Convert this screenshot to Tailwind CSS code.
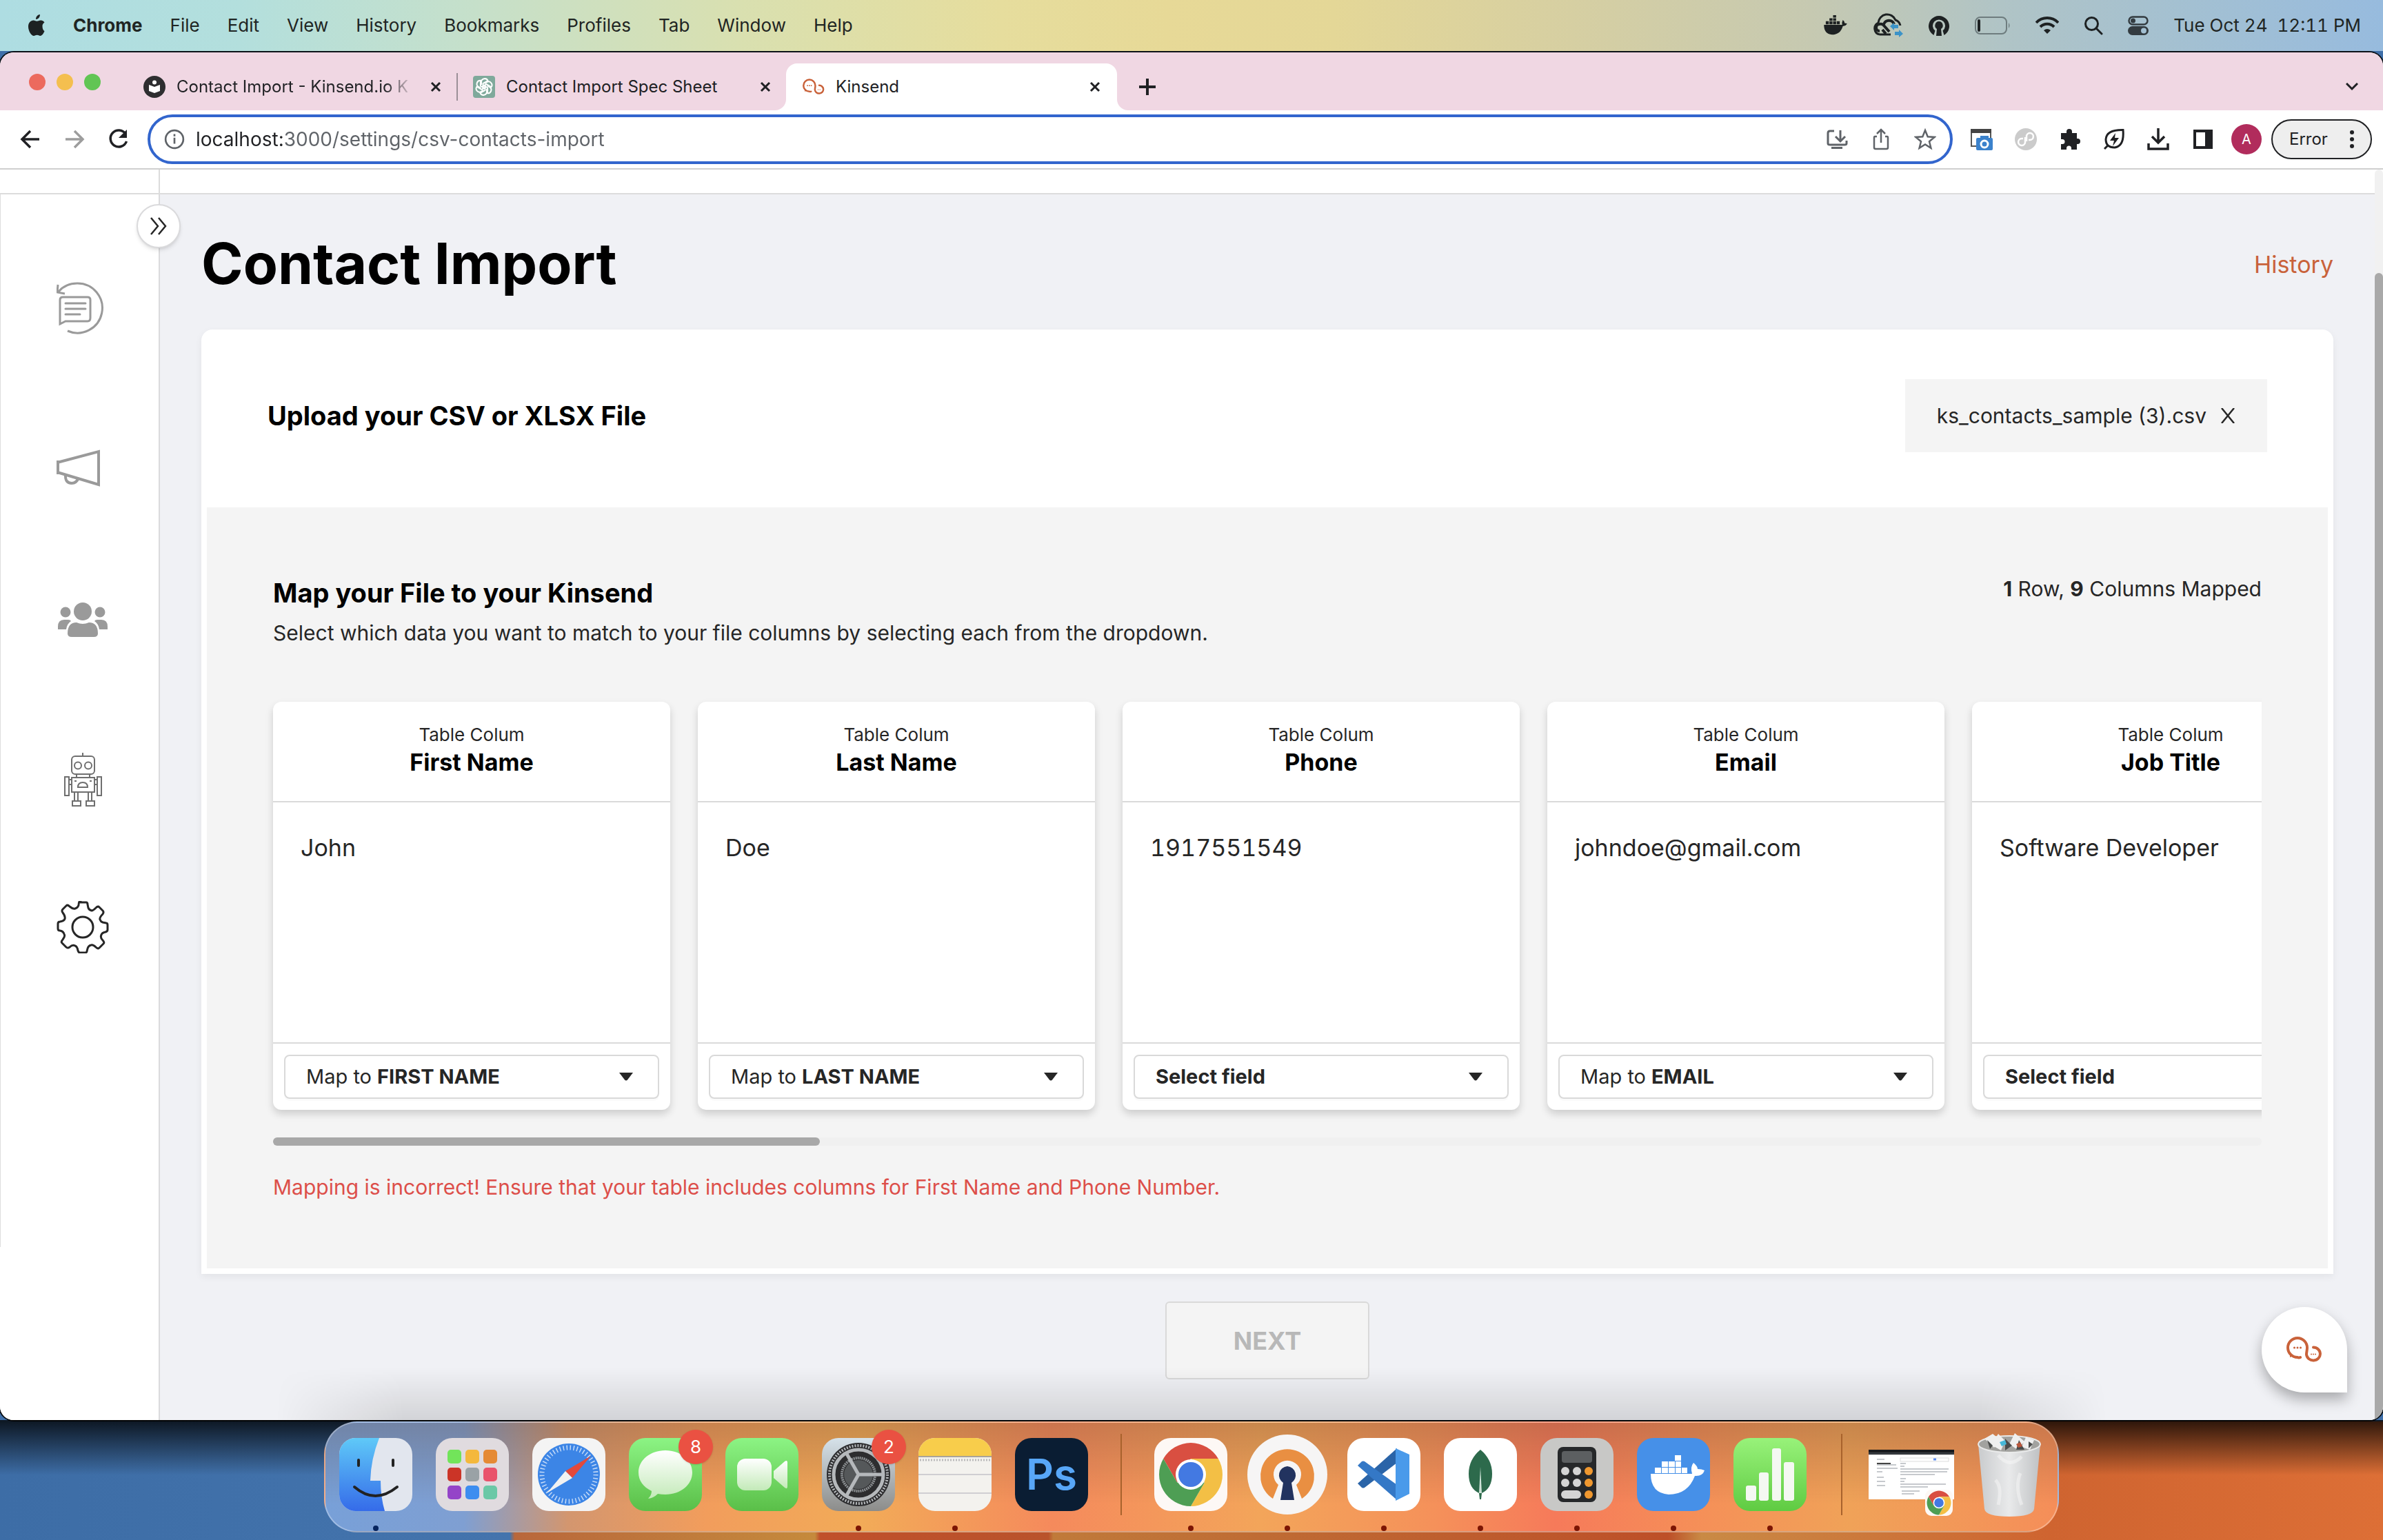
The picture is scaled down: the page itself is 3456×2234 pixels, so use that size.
<!DOCTYPE html>
<html lang="en">
<head>
<meta charset="utf-8">
<meta name="viewport" content="width=device-width, initial-scale=1">
<title>Kinsend - Contact Import</title>
<script src="https://cdn.jsdelivr.net/npm/@tailwindcss/browser@4"></script>
</head>
<body class="flex min-h-screen flex-col overflow-x-hidden bg-linear-to-r from-[#3f6fa9] from-20% via-[#8a5a2c] via-25% to-[#3f6fa9] font-[Inter,sans-serif] text-[#262626]">

<!-- shared symbols -->
<svg class="hidden" aria-hidden="true">
  <symbol id="close" viewBox="0 0 16 16"><path d="M2 2l12 12M14 2L2 14" fill="none" stroke="#202124" stroke-width="3"/></symbol>
  <symbol id="kinsend" viewBox="0 0 52 38">
    <path d="M20 30Q18 31 16 30A14 14 0 1 1 30 16C30 20 29 22 29 26A10 9.500 0 1 0 39 15.500" fill="none" stroke="#c9623a" stroke-width="4" stroke-linecap="round"/>
    <path d="M5 22v8q4-2 6-1zM45 31l1 3-6-1z" fill="#c9623a"/>
    <g fill="#c9623a"><circle cx="11.500" cy="16" r="1.500"/><circle cx="16" cy="16" r="1.500"/><circle cx="20.500" cy="16" r="1.500"/><circle cx="36" cy="25.500" r="1"/><circle cx="39" cy="25.500" r="1"/><circle cx="42" cy="25.500" r="1"/></g>
  </symbol>
  <symbol id="chrome" viewBox="0 0 100 100">
    <path d="M10.2 27A46 46 0 0 1 89.8 27L50 27L30.1 61.5Z" fill="#d94f41"/>
    <path d="M89.8 27A46 46 0 0 1 50 96L69.9 61.5L50 27Z" fill="#f3bf45"/>
    <path d="M50 96A46 46 0 0 1 10.2 27L30.1 61.5L69.900 61.5Z" fill="#4e9e54"/>
    <circle cx="50" cy="50" r="22" fill="#fff"/><circle cx="50" cy="50" r="18" fill="#4379e2"/>
  </symbol>
  <symbol id="caret" viewBox="0 0 20 12"><path d="M0 0h20L12 10.500q-2 2-4 0z" fill="#262626"/></symbol>
  <symbol id="ovpn" viewBox="0 0 32 32"><path d="M8.500 30A15 15 0 1 1 23.500 30L21.500 23.500A9 9 0 1 0 10.500 23.500Z"/><path d="M16 10a6 6 0 0 1 3 11l1 10h-8l1-10a6 6 0 0 1 3-11z"/></symbol>
  <symbol id="whale" viewBox="0 0 40 34"><path d="M1 16H31Q30 12 32 8Q35 10 35 13Q37 13 39 14Q37 18 32 18Q28 32 14 32Q1 31 1 16Z"/><path d="M4 10h5v5H4zM10 10h5v5h-5zM16 10h5v5h-5zM22 10h5v5h-5zM10 5h5v4h-5zM16 5h5v4h-5zM16 0h5v4h-5z"/></symbol>
</svg>

<!-- macOS menu bar -->
<header class="flex h-[74px] items-center justify-between bg-[linear-gradient(90deg,#aedde2_0%,#b3dfdd_10%,#c6e0ca_20%,#d9e0b0_31%,#e6dd9d_42%,#e7d997_49%,#e4d797_56%,#d6cfa2_66%,#c6c9b1_76%,#b0c4c6_84%,#a3c0d2_92%,#97bbde_100%)] pr-8 pl-10 text-[26px] leading-8 text-[#1f2523]">
  <nav aria-label="Menu bar" class="flex items-center gap-10">
    <svg class="h-8 w-[26px]" viewBox="0 0 26 32" fill="#1d2122"><path d="M18 0c0 4-2.500 6.800-6 7 0-4 3-6.800 6-7zM21.500 17c0-3.500 2.500-5 3-5.500-2-2.800-4.500-3-5.500-3-2.500 0-4 1.300-5.500 1.300S10.500 8.500 8.500 8.500C4.500 8.500 1 12 1 17.500 1 24 5.500 31 9 31c1.800 0 2.700-1.200 4.800-1.200S16.500 31 18.400 31c2.600 0 5.100-4 6.100-7-1.500-.6-3-3-3-7z"/></svg>
    <span class="font-bold">Chrome</span><span>File</span><span>Edit</span><span>View</span><span>History</span><span>Bookmarks</span><span>Profiles</span><span>Tab</span><span>Window</span><span>Help</span>
  </nav>
  <div class="flex items-center gap-9">
    <svg class="h-[30px] w-9" viewBox="0 0 40 34" fill="#1d2122"><use href="#whale"/></svg>
    <svg class="h-9 w-11" viewBox="0 0 44 36"><path d="M10 31a9 9 0 0 1-2-17A13 13 0 0 1 33 10a11 11 0 0 1 7 8M10 31h16" fill="none" stroke="#1d2122" stroke-width="3"/><path d="M10 26a5 5 0 0 1 0-10q4-1 7 3l7 8M16 16a8 8 0 0 1 15 0M14 24l5 6" fill="none" stroke="#1d2122" stroke-width="4"/><path d="M25 19l6-5v3h6v5h-6v3zM44 30l-6-6v3h-6v5h6v3z" fill="#3c93c8"/></svg>
    <svg class="size-8" viewBox="0 0 32 32" fill="#1d2122"><use href="#ovpn"/></svg>
    <svg class="h-[26px] w-[52px]" viewBox="0 0 52 26"><rect x="1" y="1" width="45" height="24" rx="7" fill="none" stroke="#6e7c7e" stroke-width="2"/><rect x="4" y="4" width="4" height="18" rx="2" fill="#1d2122"/><path d="M49 9q3 4 0 8z" fill="#6e7c7e"/></svg>
    <svg class="h-[26px] w-[34px]" viewBox="0 0 34 26" fill="none" stroke="#1d2122" stroke-width="4"><path d="M1 9a22 22 0 0 1 32 0M7 15a14 14 0 0 1 20 0"/><path d="M12 20q5-4 10 0l-5 5z" fill="#1d2122" stroke="none"/></svg>
    <svg class="size-[28px]" viewBox="0 0 28 28" fill="none" stroke="#1d2122" stroke-width="3"><circle cx="11.500" cy="11.500" r="9"/><path d="M18 18l8 8" stroke-linecap="round"/></svg>
    <svg class="h-7 w-[30px]" viewBox="0 0 30 28"><rect x="1.500" y="1.500" width="27" height="11" rx="5.500" fill="none" stroke="#333b40" stroke-width="2.500"/><circle cx="7.500" cy="7" r="3.500" fill="#333b40"/><rect y="15" width="30" height="13" rx="6.500" fill="#333b40"/><circle cx="23" cy="21.500" r="4" fill="#a3c0d2"/></svg>
    <time class="whitespace-pre tabular-nums">Tue Oct 24  12:11 PM</time>
  </div>
</header>

<!-- browser window -->
<div class="mt-0.5 flex flex-1 flex-col overflow-hidden rounded-[20px] bg-white shadow-[0_0_0_2px_#0c1218]">

  <!-- tab strip -->
  <div class="flex h-[84px] items-end bg-[#f0d7e3]">
    <div class="flex h-[68px] w-[168px] items-center gap-4 pb-[14px] pl-[42px]">
      <span class="size-6 rounded-full bg-[#ec6a5e]"></span><span class="size-6 rounded-full bg-[#f4bf4f]"></span><span class="size-6 rounded-full bg-[#61c554]"></span>
    </div>
    <div class="flex h-[68px] w-[494px] items-center pl-10 text-2xl text-[#202124]">
      <svg class="size-8 shrink-0" viewBox="0 0 32 32"><circle cx="16" cy="16" r="16" fill="#2e2e30"/><circle cx="16" cy="9.500" r="3" fill="#fff"/><path d="M8 13l8 3 8-3v9l-8 3-8-3z" fill="#fff"/></svg>
      <span class="ml-4 w-[344px] bg-linear-to-r from-[#202124] from-88% to-transparent bg-clip-text whitespace-nowrap text-transparent">Contact Import - Kinsend.io K</span>
      <button aria-label="Close tab" class="ml-6 shrink-0"><svg class="size-4"><use href="#close"/></svg></button>
    </div>
    <div class="flex h-[68px] w-[478px] items-center text-2xl text-[#202124]">
      <span class="h-10 w-0.5 bg-[#9b8f97]"></span>
      <svg class="ml-[22px] size-8 shrink-0" viewBox="0 0 32 32"><rect width="32" height="32" rx="4" fill="#7fa99b"/><g fill="none" stroke="#fff" stroke-width="2"><path id="petal" d="M12 13v-4a5 5 0 0 1 9.500-2l-7 4v8"/><use href="#petal" transform="rotate(60 16 16)"/><use href="#petal" transform="rotate(120 16 16)"/><use href="#petal" transform="rotate(180 16 16)"/><use href="#petal" transform="rotate(240 16 16)"/><use href="#petal" transform="rotate(300 16 16)"/></g></svg>
      <span class="ml-4 flex-1">Contact Import Spec Sheet</span>
      <button aria-label="Close tab" class="mr-[22px]"><svg class="size-4"><use href="#close"/></svg></button>
    </div>
    <div class="relative flex h-[68px] w-[480px] items-center rounded-t-2xl bg-white px-6 text-2xl text-[#202124]">
      <svg class="absolute bottom-0 -left-4 size-4" viewBox="0 0 16 16"><path d="M16 0v16H0A16 16 0 0 0 16 0z" fill="#fff"/></svg>
      <svg class="absolute -right-4 bottom-0 size-4" viewBox="0 0 16 16"><path d="M0 0v16h16A16 16 0 0 1 0 0z" fill="#fff"/></svg>
      <svg class="h-6 w-8"><use href="#kinsend"/></svg>
      <span class="ml-4 flex-1">Kinsend</span>
      <button aria-label="Close tab"><svg class="size-4"><use href="#close"/></svg></button>
    </div>
    <button aria-label="New tab" class="ml-8 flex h-[68px] items-center"><svg class="size-6" viewBox="0 0 24 24"><path d="M12 0v24M0 12h24" stroke="#202124" stroke-width="4"/></svg></button>
    <button aria-label="Search tabs" class="mr-9 ml-auto flex h-[68px] items-center"><svg class="h-3 w-[18px]" viewBox="0 0 18 12"><path d="M1 1l8 8 8-8" fill="none" stroke="#202124" stroke-width="3"/></svg></button>
  </div>

  <!-- toolbar -->
  <div class="flex h-[86px] items-center border-b-2 border-[#cfcfcf] pr-4 pl-7">
    <div class="flex items-center gap-8">
      <button aria-label="Back"><svg class="size-8" viewBox="0 0 32 32" fill="none" stroke="#202124" stroke-width="3.500"><path d="M29 16H5M16 4L4 16l12 12"/></svg></button>
      <button aria-label="Forward"><svg class="size-8" viewBox="0 0 32 32" fill="none" stroke="#9d9d9d" stroke-width="3.500"><path d="M3 16h24M16 4l12 12-12 12"/></svg></button>
      <button aria-label="Reload"><svg class="size-8" viewBox="0 0 32 32"><path d="M26 8A12 12 0 1 0 27.500 19" fill="none" stroke="#202124" stroke-width="3.500"/><path d="M28 2v12H16z" fill="#202124"/></svg></button>
    </div>
    <div class="ml-[26px] flex h-[72px] flex-1 items-center rounded-full border-4 border-[#3265cd] pr-5 pl-5">
      <svg class="size-[30px]" viewBox="0 0 28 28"><circle cx="14" cy="14" r="12" fill="none" stroke="#5f6368" stroke-width="2.500"/><path d="M14 12v8M14 7v3" stroke="#5f6368" stroke-width="2.500"/></svg>
      <div class="ml-4 flex-1 text-[28px] leading-9">
        <input aria-label="Address" value="localhost:3000/settings/csv-contacts-import" class="w-full bg-linear-to-r from-[#202124] from-[126px] to-[#5f6368] to-[126px] bg-clip-text text-transparent outline-none">
      </div>
      <div class="flex items-center gap-8 text-[#5f6368]">
        <svg class="size-8" viewBox="0 0 32 32" fill="none" stroke="currentColor" stroke-width="3"><path d="M12 4H6q-3 0-3 3v15q0 2 3 2h21q3 0 3-2v-4M21 3v14M14 12l7 7 7-7"/><path d="M8 27h16v3H8z" fill="currentColor" stroke="none"/></svg>
        <svg class="size-8" viewBox="0 0 32 32" fill="none" stroke="currentColor" stroke-width="2.500"><path d="M10 12H7q-1 0-1 2v14q0 2 2 2h16q2 0 2-2V14q0-2-1-2h-3M16 21V3M10 8l6-6 6 6"/></svg>
        <svg class="size-8" viewBox="0 0 32 32" fill="none" stroke="currentColor" stroke-width="2.500"><path d="M16 3l3.700 9.200 9.800.7-7.500 6.300 2.400 9.600L16 23.500l-8.400 5.300L10 19.200 2.500 12.900l9.800-.7z"/></svg>
      </div>
    </div>
    <div class="ml-[26px] flex items-center gap-8">
      <svg class="size-8" viewBox="0 0 32 32"><path d="M1 2h28v24H1z" fill="#fff" stroke="#555" stroke-width="2"/><path d="M0 1h30v6H0z" fill="#444"/><rect x="8" y="14" width="24" height="18" rx="2" fill="#3b82cc"/><path d="M14 11h12v4H14z" fill="#3b82cc"/><circle cx="20" cy="23" r="5" fill="none" stroke="#fff" stroke-width="3"/></svg>
      <svg class="size-8" viewBox="0 0 32 32"><circle cx="16" cy="16" r="16" fill="#cbcbcb"/><path d="M17 19v-8a5 5 0 1 1 5 6h-2M15 13v8a5 5 0 1 1-5-6h2" fill="none" stroke="#fff" stroke-width="2.500"/></svg>
      <svg class="size-8" viewBox="0 0 32 32" fill="#202124"><path d="M3 7h8V5a4 4 0 0 1 8 0v2h7v8h1a4 4 0 0 1 0 8h-1v8h-8v-2a3 3 0 0 0-7 0v2H3v-8h2a3.500 3.500 0 0 0 0-7H3z"/></svg>
      <svg class="size-8" viewBox="0 0 32 32" fill="none" stroke="#202124" stroke-width="3"><path d="M29 2.500Q31 26 17 28 4 28 4 16 5 2 29 2.500zM8 24l-6 6"/><path d="M18 7l-8 11h6l-2 8 9-12h-6z" fill="#202124" stroke="none"/></svg>
      <svg class="size-8" viewBox="0 0 32 32" fill="none" stroke="#202124" stroke-width="3.500"><path d="M16 0v21M7 12l9 9 9-9M2 22v8h28v-8"/></svg>
      <svg class="h-[30px] w-8" viewBox="0 0 32 30"><path d="M3 1h28v28H3z" fill="#202124"/><path d="M7 5h13v20H7z" fill="#fff"/></svg>
    </div>
    <button class="ml-[26px] size-11 rounded-full bg-[#b12c5c] text-xl text-white">A</button>
    <button class="ml-[14px] flex h-[58px] w-[146px] items-center justify-between rounded-full border-2 border-[#202124] bg-[#eeeeee] px-6 text-2xl text-[#202124]">Error
      <svg class="h-7 w-1.5" viewBox="0 0 6 28" fill="#202124"><circle cx="3" cy="4" r="3"/><circle cx="3" cy="14" r="3"/><circle cx="3" cy="24" r="3"/></svg>
    </button>
  </div>

  <!-- page -->
  <div class="flex flex-1">
    <div class="flex min-w-0 flex-1 flex-col">
      <div class="h-9 border-b-2 border-[#dcdcdc]"><div class="h-[34px] w-[232px] border-r-2 border-[#dcdcdc]"></div></div>
      <div class="flex flex-1">
        <aside class="relative z-10 w-[232px] shrink-0 border-r-2 border-[#dadadc] bg-white">
          <button aria-label="Expand sidebar" class="absolute top-[14px] -right-8 flex size-16 items-center justify-center rounded-full border-2 border-[#dadadc] bg-white shadow-md">
            <svg class="h-[26px] w-6" viewBox="0 0 24 26" fill="none" stroke="#262626" stroke-width="2.500"><path d="M1 1l10 12L1 25M12 1l10 12-10 12"/></svg>
          </button>
          <nav aria-label="Sections" class="flex flex-col items-center gap-[166px] border-l border-[#dddddd] pt-[127px] pb-[426px] pl-2">
            <a href="#" aria-label="Messages"><svg class="h-[76px] w-[76px]" viewBox="4 0 76 76" fill="none" stroke="#9a9a9a" stroke-width="3"><path d="M7 14Q17 2 34 2A36 36 0 1 1 20 71M6 4l-1 11 11 2M9 61V26q0-4 4-4h36q4 0 4 4v26q0 5-4 5H17z"/><path d="M17 31h29M17 39h29M17 47h21" stroke-linecap="round"/></svg></a>
            <a href="#" aria-label="Campaigns"><svg class="h-14 w-[76px]" viewBox="4 0 76 56" fill="none" stroke="#9a9a9a" stroke-width="4"><path d="M6 17v20M5 20L65 4v48L5 34M17 37q-1 13 9 13 7 0 10-8"/></svg></a>
            <a href="#" aria-label="Contacts"><svg class="h-[52px] w-[76px]" viewBox="0 0 76 52" fill="#9a9a9a"><circle cx="38" cy="14" r="13"/><circle cx="13" cy="15" r="7.500"/><circle cx="63" cy="15" r="7.500"/><path d="M2 40v-4q0-10 9-10h6q3 0 4 2-6 4-7 12zM74 40v-4q0-10-9-10h-6q-3 0-4 2 6 4 7 12zM16 46q0-16 13-16 9 4 18 0 13 0 13 16 0 5-6 5H22q-6 0-6-5z"/></svg></a>
            <a href="#" aria-label="Automation"><svg class="h-20 w-[76px]" viewBox="0 0 76 80" fill="none" stroke="#6f6f6f" stroke-width="2"><path d="M38 1v5"/><rect x="22" y="6" width="33" height="26" rx="5"/><circle cx="31" cy="19.500" r="5"/><circle cx="46" cy="19.500" r="5"/><path d="M29 32v5M48 32v5"/><rect x="22" y="37" width="33" height="21"/><path d="M31 51q0-7 7-7t7 7zM26 42h3M48 42h3"/><path d="M22 40h-4v7h4M55 40h4v7h-4"/><rect x="12" y="36" width="6" height="27"/><rect x="59" y="36" width="6" height="27"/><path d="M26 58v13M31 58v13M46 58v13M51 58v13"/><rect x="23" y="71" width="12" height="7"/><rect x="43" y="71" width="12" height="7"/></svg></a>
            <a href="#" aria-label="Settings" class="-mt-[30px]"><svg class="size-[76px]" viewBox="0 0 76 76" fill="none" stroke="#262626" stroke-width="3" stroke-linejoin="round"><path d="M33 2h10q2 0 2 3l1 5q1 3 5 4 2 0 6-4 3-3 5-1l5 5q2 2 0 5-5 5-4 8 1 3 4 4l5 1q2 0 2 3v7q0 2-3 3-5 1-6 4-2 4 2 8 3 3 1 5l-6 6q-2 2-5-1-4-4-7-3-4 1-5 5l-1 4q0 2-3 2h-7q-2 0-3-3-1-6-4-7-4-2-8 2-3 2-5 0l-6-6q-2-2 1-5 4-5 2-8-1-4-6-5-3 0-3-3v-7q0-3 3-3 6-1 7-4 1-4-3-9-2-3 0-5l5-5q2-2 5 1 5 4 8 3 4-1 5-5 0-6 3-6z"/><circle cx="38" cy="38" r="15"/></svg></a>
          </nav>
        </aside>

        <main class="relative flex-1 overflow-hidden bg-[#f0f1f5] pr-[60px] pb-[59px] pl-[60px]">
          <div class="flex h-[196px] items-center justify-between pt-[6px]">
            <h1 class="text-[82px] leading-none font-bold text-black">Contact Import</h1>
            <a href="#" class="text-[34px] text-[#c9623a]">History</a>
          </div>

          <section class="rounded-t-2xl bg-white shadow-[0_4px_12px_rgba(0,0,0,0.06)]">
            <div class="flex h-[258px] items-center justify-between px-24 pb-2">
              <h2 class="text-[38px] font-bold text-black">Upload your CSV or XLSX File</h2>
              <div class="flex h-[106px] items-center gap-5 bg-[#f4f4f4] px-[46px] text-[30px]">
                <span>ks_contacts_sample (3).csv</span>
                <button aria-label="Remove file"><svg class="size-[22px]" viewBox="0 0 22 22"><path d="M2 0l18 22M20 0L2 22" stroke="#262626" stroke-width="2.500"/></svg></button>
              </div>
            </div>
            <div class="border-8 border-t-0 border-white bg-[#f4f4f4] px-24 pt-[100px] pb-24">
              <div class="flex items-start justify-between">
                <div>
                  <h2 class="text-[38px] leading-[48px] font-bold text-black">Map your File to your Kinsend</h2>
                  <p class="mt-3 text-[30px] leading-[44px]">Select which data you want to match to your file columns by selecting each from the dropdown.</p>
                </div>
                <p class="text-[30px] leading-9"><b>1</b> Row, <b>9</b> Columns Mapped</p>
              </div>

              <div class="-mx-3 flex gap-10 overflow-hidden px-3 pt-[78px] pb-10 [clip-path:inset(0_12px_0_0)]">
                <article class="w-[576px] shrink-0 rounded-xl bg-white shadow-[0_6px_12px_rgba(0,0,0,0.16)]">
                  <header class="h-[146px] border-b-2 border-[#dadada] pt-[30px] text-center"><p class="text-[26px] leading-9">Table Colum</p><h3 class="text-[34px] leading-[44px] font-bold text-black">First Name</h3></header>
                  <p class="h-[350px] border-b-2 border-[#dadada] px-10 pt-11 text-[34px] leading-[44px]">John</p>
                  <div class="px-4 py-4"><label class="flex h-16 items-center gap-2 rounded-lg border-2 border-[#d9d9d9] pr-9 pl-[30px] text-[29px] shadow-[0_3px_0_rgba(0,0,0,0.02)]">Map to <select class="min-w-0 flex-1 appearance-none font-bold outline-none"><option>FIRST NAME</option><option>Select field</option></select><svg class="h-3 w-5"><use href="#caret"/></svg></label></div>
                </article>
                <article class="w-[576px] shrink-0 rounded-xl bg-white shadow-[0_6px_12px_rgba(0,0,0,0.16)]">
                  <header class="h-[146px] border-b-2 border-[#dadada] pt-[30px] text-center"><p class="text-[26px] leading-9">Table Colum</p><h3 class="text-[34px] leading-[44px] font-bold text-black">Last Name</h3></header>
                  <p class="h-[350px] border-b-2 border-[#dadada] px-10 pt-11 text-[34px] leading-[44px]">Doe</p>
                  <div class="px-4 py-4"><label class="flex h-16 items-center gap-2 rounded-lg border-2 border-[#d9d9d9] pr-9 pl-[30px] text-[29px] shadow-[0_3px_0_rgba(0,0,0,0.02)]">Map to <select class="min-w-0 flex-1 appearance-none font-bold outline-none"><option>LAST NAME</option><option>Select field</option></select><svg class="h-3 w-5"><use href="#caret"/></svg></label></div>
                </article>
                <article class="w-[576px] shrink-0 rounded-xl bg-white shadow-[0_6px_12px_rgba(0,0,0,0.16)]">
                  <header class="h-[146px] border-b-2 border-[#dadada] pt-[30px] text-center"><p class="text-[26px] leading-9">Table Colum</p><h3 class="text-[34px] leading-[44px] font-bold text-black">Phone</h3></header>
                  <p class="h-[350px] border-b-2 border-[#dadada] px-10 pt-11 text-[34px] leading-[44px] tabular-nums">1917551549</p>
                  <div class="px-4 py-4"><label class="flex h-16 items-center gap-2 rounded-lg border-2 border-[#d9d9d9] pr-9 pl-[30px] text-[29px] shadow-[0_3px_0_rgba(0,0,0,0.02)]"><select aria-label="Map Phone" class="min-w-0 flex-1 appearance-none font-bold outline-none"><option>Select field</option><option>PHONE</option></select><svg class="h-3 w-5"><use href="#caret"/></svg></label></div>
                </article>
                <article class="w-[576px] shrink-0 rounded-xl bg-white shadow-[0_6px_12px_rgba(0,0,0,0.16)]">
                  <header class="h-[146px] border-b-2 border-[#dadada] pt-[30px] text-center"><p class="text-[26px] leading-9">Table Colum</p><h3 class="text-[34px] leading-[44px] font-bold text-black">Email</h3></header>
                  <p class="h-[350px] border-b-2 border-[#dadada] px-10 pt-11 text-[34px] leading-[44px]">johndoe@gmail.com</p>
                  <div class="px-4 py-4"><label class="flex h-16 items-center gap-2 rounded-lg border-2 border-[#d9d9d9] pr-9 pl-[30px] text-[29px] shadow-[0_3px_0_rgba(0,0,0,0.02)]">Map to <select class="min-w-0 flex-1 appearance-none font-bold outline-none"><option>EMAIL</option><option>Select field</option></select><svg class="h-3 w-5"><use href="#caret"/></svg></label></div>
                </article>
                <article class="w-[576px] shrink-0 rounded-xl bg-white shadow-[0_6px_12px_rgba(0,0,0,0.16)]">
                  <header class="h-[146px] border-b-2 border-[#dadada] pt-[30px] text-center"><p class="text-[26px] leading-9">Table Colum</p><h3 class="text-[34px] leading-[44px] font-bold text-black">Job Title</h3></header>
                  <p class="h-[350px] border-b-2 border-[#dadada] px-10 pt-11 text-[34px] leading-[44px]">Software Developer</p>
                  <div class="px-4 py-4"><label class="flex h-16 items-center gap-2 rounded-lg border-2 border-[#d9d9d9] pr-9 pl-[30px] text-[29px] shadow-[0_3px_0_rgba(0,0,0,0.02)]"><select aria-label="Map Job Title" class="min-w-0 flex-1 appearance-none font-bold outline-none"><option>Select field</option><option>JOB TITLE</option></select><svg class="h-3 w-5"><use href="#caret"/></svg></label></div>
                </article>
              </div>
              <div class="h-3 rounded-full bg-[#f0f0f0]"><div class="h-3 rounded-full bg-[#a8a8a8]" style="width:27.5%"></div></div>
              <p role="alert" class="mt-[38px] text-[30px] leading-[44px] text-[#dd4f4a]">Mapping is incorrect! Ensure that your table includes columns for First Name and Phone Number.</p>
            </div>
          </section>

          <div class="mt-10 flex justify-center">
            <button disabled class="h-[113px] w-[296px] rounded-md border-2 border-[#d9d9d9] bg-[#f4f4f4] text-[36px] font-bold text-[#b8b8b8]">NEXT</button>
          </div>

          <button aria-label="Open chat" class="absolute right-10 bottom-10 flex size-[124px] items-center justify-center rounded-full rounded-br-2xl bg-white shadow-[0_10px_20px_rgba(0,0,0,0.3)]">
            <svg class="h-[38px] w-[52px]"><use href="#kinsend"/></svg>
          </button>
        </main>
      </div>
    </div>
    <div class="flex w-3 flex-col rounded-t-full bg-[#f1f1f1] pt-[150px]"><div class="flex-1 rounded-t-full bg-[#a9a9a9]"></div></div>
  </div>
</div>

<!-- wallpaper strip and dock -->
<footer class="relative -mt-5 flex h-[194px] shrink-0 justify-center bg-[linear-gradient(90deg,#3d6da6_0%,#4474ad_21.4%,#b9673b_21.6%,#c58a3c_34.2%,#c0502b_34.4%,#b9532b_44%,#c07a3a_44.2%,#bd4f28_70%,#c98a45_71.400%,#cf6430_86%,#dd6f36_100%)] pt-[22px] [background-clip:content-box] [clip-path:polygon(-1px_20px,8px_20px,8px_-80px,calc(100%_-_8px)_-80px,calc(100%_-_8px)_20px,calc(100%_+_1px)_20px,calc(100%_+_1px)_100%,-1px_100%)]">
  <div class="absolute inset-x-0 top-5 h-20 bg-linear-to-b from-black/80 to-transparent"></div>
  <div class="absolute inset-x-[400px] -top-[56px] h-[76px] bg-linear-to-b from-transparent to-black/12 [mask-image:linear-gradient(90deg,transparent,black_7%,black_93%,transparent)]"></div>
  <div class="relative flex h-[161px] items-center gap-[34px] rounded-[48px] border-2 border-white/30 bg-[linear-gradient(180deg,rgba(90,60,40,0.28),transparent_75%),linear-gradient(90deg,#78a0d8_0%,#7f9fd2_8%,#d3966f_14%,#f29d5c_22%,#f2ab58_31%,#f58a5c_42%,#f3a55a_54%,#f5915a_64%,#f67a5a_71%,#f59158_80%,#f0a258_88%,#f58e59_100%)] pr-6 pb-2 pl-5">
    <div class="relative"><svg class="size-[106px]" viewBox="0 0 106 106"><defs><linearGradient id="fb" x2="0" y2="1"><stop stop-color="#5fc9f8"/><stop offset="1" stop-color="#356be9"/></linearGradient><clipPath id="r"><rect width="106" height="106" rx="24"/></clipPath></defs><g clip-path="url(#r)"><path d="M0 0h106v106H0z" fill="#e2e6ee"/><path d="M0 0h58Q46 30 45 62h15q0 24 6 44H0z" fill="url(#fb)"/></g><path d="M28 32v8M78 32v8" stroke="#222" stroke-width="4" stroke-linecap="round"/><path d="M22 71q30 26 62 0" fill="none" stroke="#222" stroke-width="4" stroke-linecap="round"/></svg><span class="absolute top-[127px] left-[49px] size-2 rounded-full bg-[#06245e]"></span></div>
    <svg class="size-[106px]" viewBox="0 0 106 106"><rect width="106" height="106" rx="24" fill="#e0dbdf"/><g><rect x="17" y="17" width="20" height="20" rx="5" fill="#72e45a"/><rect x="43" y="17" width="20" height="20" rx="5" fill="#f4b83c"/><rect x="69" y="17" width="20" height="20" rx="5" fill="#e58a35"/><rect x="17" y="43" width="20" height="20" rx="5" fill="#cb3427"/><rect x="43" y="43" width="20" height="20" rx="5" fill="#9aa2a6"/><rect x="69" y="43" width="20" height="20" rx="5" fill="#e9536b"/><rect x="17" y="69" width="20" height="20" rx="5" fill="#9444c8"/><rect x="43" y="69" width="20" height="20" rx="5" fill="#3d8df0"/><rect x="69" y="69" width="20" height="20" rx="5" fill="#6ac8a6"/></g></svg>
    <svg class="size-[106px]" viewBox="0 0 106 106"><rect width="106" height="106" rx="24" fill="#f4f4f4"/><circle cx="53" cy="53" r="45" fill="#3c85e6"/><circle cx="53" cy="53" r="39" fill="none" stroke="#fff" stroke-width="7" stroke-dasharray="1.500 3.500" opacity=".7"/><path d="M85 26L48 48l10 10z" fill="#e2493c"/><path d="M21 80L48 48l10 10z" fill="#f2f2f2"/></svg>
    <div class="relative"><svg class="size-[106px]" viewBox="0 0 106 106"><defs><linearGradient id="gr" x2="0" y2="1"><stop stop-color="#8cf484"/><stop offset="1" stop-color="#5abf48"/></linearGradient><linearGradient id="wg" x2="0" y2="1"><stop stop-color="#fff"/><stop offset="1" stop-color="#c3eab8"/></linearGradient></defs><rect width="106" height="106" rx="24" fill="url(#gr)"/><path d="M53 18c22 0 39 14 39 32S75 82 53 82q-6 0-11-1-6 6-14 7 5-5 5-11C21 71 14 62 14 50c0-18 17-32 39-32z" fill="url(#wg)"/></svg><span class="absolute -top-3 -right-4 flex size-[50px] items-center justify-center rounded-full bg-[#ea5142] text-[26px] text-white shadow">8</span></div>
    <svg class="size-[106px]" viewBox="0 0 106 106"><rect width="106" height="106" rx="24" fill="url(#gr)"/><rect x="17" y="30" width="50" height="46" rx="12" fill="url(#wg)"/><path d="M70 48l16-14q4-3 4 2v34q0 5-4 2L70 58z" fill="url(#wg)"/></svg>
    <div class="relative"><svg class="size-[106px]" viewBox="0 0 106 106"><defs><linearGradient id="sg" x2="0" y2="1"><stop stop-color="#d6e2ea"/><stop offset="1" stop-color="#8c8c8a"/></linearGradient></defs><rect width="106" height="106" rx="24" fill="url(#sg)"/><circle cx="53" cy="53" r="46" fill="#2d2d2f"/><circle cx="53" cy="53" r="42" fill="none" stroke="#b5b8bb" stroke-width="4" stroke-dasharray="2 2"/><circle cx="53" cy="53" r="36" fill="none" stroke="#b5b8bb" stroke-width="5"/><circle cx="53" cy="53" r="24" fill="none" stroke="#8c9093" stroke-width="4" stroke-dasharray="2 1"/><circle cx="53" cy="53" r="21" fill="#55585a"/><path d="M53 53h34M53 53L36 23M53 53L36 83" stroke="#b5b8bb" stroke-width="5"/></svg><span class="absolute -top-3 -right-4 flex size-[50px] items-center justify-center rounded-full bg-[#ea5142] text-[26px] text-white shadow">2</span><span class="absolute top-[127px] left-[49px] size-2 rounded-full bg-[#7c1504]"></span></div>
    <div class="relative"><svg class="size-[106px]" viewBox="0 0 106 106"><g clip-path="url(#r)"><path d="M0 0h106v106H0z" fill="#f3f2ee"/><path d="M0 0h106v26H0z" fill="#f8cd4b"/><path d="M0 27h106" stroke="#a9a49a" stroke-width="2"/><path d="M2 32h104" stroke="#bbb" stroke-width="3" stroke-dasharray="2 2"/><path d="M0 53h106M0 80h106" stroke="#cfced2" stroke-width="2"/></g></svg><span class="absolute top-[127px] left-[49px] size-2 rounded-full bg-[#7c1504]"></span></div>
    <div class="flex size-[106px] items-center justify-center rounded-3xl bg-[#0a1d33] text-[62px] font-semibold text-[#58a7f8]">Ps</div>
    <span class="mx-[13px] h-[118px] w-0.5 bg-[#a8622c]"></span>
    <div class="relative"><svg class="size-[106px]" viewBox="0 0 106 106"><rect width="106" height="106" rx="24" fill="#fdf8f5"/><use href="#chrome" x="3" y="3" width="100" height="100"/></svg><span class="absolute top-[127px] left-[49px] size-2 rounded-full bg-[#7c1504]"></span></div>
    <div class="relative"><svg class="size-[106px] overflow-visible" viewBox="0 0 106 106"><circle cx="53" cy="53" r="58" fill="#f6f5f5"/><path d="M32 88A39 39 0 1 1 74 88L66 68A20 20 0 1 0 40 68Z" fill="#e98f42"/><path d="M53 41a13 13 0 0 1 6 24l4 25H43l4-25a13 13 0 0 1 6-24z" fill="#22335f"/></svg><span class="absolute top-[127px] left-[49px] size-2 rounded-full bg-[#7c1504]"></span></div>
    <div class="relative"><svg class="size-[106px]" viewBox="0 0 106 106"><rect width="106" height="106" rx="24" fill="#fff"/><path d="M15 66l6 6q2 1 4 0L72 36V15z" fill="#2a64a8"/><path d="M15 40l6-6q2-1 4 0L72 68v22z" fill="#3478c6"/><path d="M70 15l20 9v57l-20 10z" fill="#4a9aea"/></svg><span class="absolute top-[127px] left-[49px] size-2 rounded-full bg-[#7c1504]"></span></div>
    <div class="relative"><svg class="size-[106px]" viewBox="0 0 106 106"><rect width="106" height="106" rx="24" fill="#fff"/><path d="M53 17q17 14 17 35T55 80l-1 9h-2l-1-9Q36 73 36 52t17-35z" fill="#2d6a4c"/><path d="M53 42l2 38h-4z" fill="#cfe3d8"/></svg><span class="absolute top-[127px] left-[49px] size-2 rounded-full bg-[#7c1504]"></span></div>
    <div class="relative"><svg class="size-[106px]" viewBox="0 0 106 106"><rect width="106" height="106" rx="24" fill="#c8c8c6"/><rect x="25" y="13" width="56" height="80" rx="8" fill="#26282a"/><rect x="31" y="19" width="44" height="17" rx="4" fill="#5c5f61"/><g fill="#d4d4d4"><circle cx="36" cy="48" r="6"/><circle cx="53" cy="48" r="6"/><circle cx="36" cy="65" r="6"/><circle cx="53" cy="65" r="6"/><rect x="30" y="76" width="29" height="12" rx="6"/></g><g fill="#f0982f"><circle cx="70" cy="48" r="6"/><circle cx="70" cy="65" r="6"/><circle cx="70" cy="82" r="6"/></g></svg><span class="absolute top-[127px] left-[49px] size-2 rounded-full bg-[#7c1504]"></span></div>
    <div class="relative"><svg class="size-[106px]" viewBox="0 0 106 106"><rect width="106" height="106" rx="24" fill="#4690e8"/><g fill="#fff"><path d="M20 52h60q-3-10 2-16 6 5 6 9 6 0 10 2-3 9-14 8Q74 82 46 82 20 80 20 52z"/><path d="M26 43h9v8h-9zM36 43h9v8h-9zM46 43h9v8h-9zM56 43h8v8h-8zM65 43h8v8h-8zM36 34h9v8h-9zM46 34h9v8h-9zM56 34h8v8h-8zM55 25h9v8h-9z"/></g></svg><span class="absolute top-[127px] left-[49px] size-2 rounded-full bg-[#7c1504]"></span></div>
    <div class="relative"><svg class="size-[106px]" viewBox="0 0 106 106"><defs><linearGradient id="ng" x2="0" y2="1"><stop stop-color="#98f27a"/><stop offset="1" stop-color="#5fcb42"/></linearGradient></defs><rect width="106" height="106" rx="24" fill="url(#ng)"/><g fill="#f4f8f2"><rect x="18" y="69" width="15" height="22" rx="3"/><rect x="37" y="50" width="14" height="41" rx="3"/><rect x="56" y="15" width="13" height="76" rx="3"/><rect x="73" y="35" width="15" height="56" rx="3"/></g></svg><span class="absolute top-[127px] left-[49px] size-2 rounded-full bg-[#7c1504]"></span></div>
    <span class="mr-1 ml-4 h-[118px] w-0.5 bg-[#a8622c]"></span>
    <svg class="h-[96px] w-[124px] translate-y-3" viewBox="0 0 124 96"><path d="M0 0h124v72H0z" fill="#fff"/><path d="M0 0h124v7H0z" fill="#17191c"/><path d="M0 5h124" stroke="#3b4045" stroke-width="2"/><g stroke="#b4b8bd" stroke-width="1.500"><path d="M12 14h11M12 22h28M12 27h30M12 32h8M12 40h10M12 46h12M12 52h12M46 20h8M46 24h6M46 28h70M46 32h68M46 36h50M46 42h8M46 46h6M46 50h66M46 54h40M48 60h26M48 64h18"/></g><path d="M12 20h20" stroke="#444" stroke-width="2"/><rect x="46" y="12" width="70" height="5" fill="none" stroke="#ddd"/><path d="M94 14h4" stroke="#5b8cf0" stroke-width="3"/><rect x="82" y="58" width="40" height="38" rx="9" fill="#fdf8f5"/><use href="#chrome" x="83" y="58" width="38" height="38"/></svg>
    <svg class="h-[124px] w-[92px]" viewBox="0 0 92 124"><defs><linearGradient id="tg"><stop stop-color="#c9cbcd"/><stop offset=".5" stop-color="#e9eaeb"/><stop offset="1" stop-color="#bfc1c3"/></linearGradient></defs><path d="M1 18L10 112q2 11 36 11t36-11L91 18z" fill="url(#tg)"/><ellipse cx="46" cy="18" rx="45" ry="12" fill="#a2a29f" stroke="#e9eaea" stroke-width="2"/><path d="M10 10l12-7 10 8-8 12zM30 3l10 10-6 14-14-8zM54 2l14 12-10 12-12-8zM70 8l12 4-6 14-12-4z" fill="#efefef"/><path d="M14 12l8 8-4 5zM40 10l10 10-10 7zM60 12l8 14H56zM74 14l6 4-6 6z" fill="#4b4d4c"/><path d="M32 15l8-3 2 6-7 3z" fill="#46b8d8"/><path d="M56 18l6-3 3 6-6 2z" fill="#b9553a"/><path d="M30 34q16 20 34 2M26 70q10 10 4 36M62 60q-8 20 2 46" stroke="#f7f7f7" stroke-width="5" fill="none" opacity=".5"/></svg>
  </div>
</footer>
</body>
</html>
